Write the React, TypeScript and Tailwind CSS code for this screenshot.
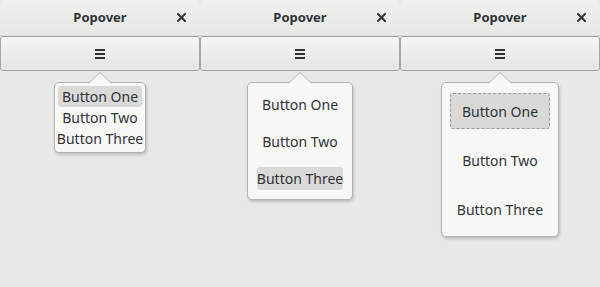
import React from 'react'

const items = ['Button One', 'Button Two', 'Button Three']

type Variant = {
  box: string
  list: string
  item: string
  active: number
  activeCls: string
}

const variants: Variant[] = [
  {
    box: 'w-[92px] mt-[11px]',
    list: 'p-[3px] gap-0',
    item: 'h-[21px]',
    active: 0,
    activeCls: 'bg-[#dadad8] rounded-[3px]',
  },
  {
    box: 'w-[106px] mt-[11px]',
    list: 'pt-[10px] pb-[9px] px-[9px] gap-[14px]',
    item: 'h-[23px]',
    active: 2,
    activeCls: 'bg-[#dadad8] rounded-[3px]',
  },
  {
    box: 'w-[118px] mt-[11px]',
    list: 'pt-[10px] pb-[9px] px-[8px] gap-[13px]',
    item: 'h-[36px]',
    active: 0,
    activeCls: 'bg-[#d9dad8] rounded-[3px] border border-dashed border-[#9c9d9b]',
  },
]

function CloseIcon() {
  return (
    <svg width="9" height="9" viewBox="0 0 9 9" className="text-[#2e3436]">
      <path d="M1 1 L8 8 M8 1 L1 8" stroke="currentColor" strokeWidth="2" strokeLinecap="square" />
    </svg>
  )
}

function MenuIcon() {
  return (
    <svg width="10" height="10" viewBox="0 0 10 10" className="text-[#2e3436]">
      <rect x="0" y="0" width="10" height="2" fill="currentColor" />
      <rect x="0" y="4" width="10" height="2" fill="currentColor" />
      <rect x="0" y="8" width="10" height="2" fill="currentColor" />
    </svg>
  )
}

function Popover({ v }: { v: Variant }) {
  return (
    <div className={`relative ${v.box} bg-[#f8f8f7] border border-[#b3b3b1] rounded-[5px] shadow-[1px_2px_3px_rgba(0,0,0,0.18)]`}>
      {/* arrow */}
      <svg
        width="24"
        height="12"
        viewBox="0 0 24 12"
        className="absolute left-1/2 -translate-x-1/2 -top-[11px]"
      >
        <path d="M0 12 L12 0.5 L24 12 Z" fill="#f8f8f7" />
        <path d="M0.5 11.5 L12 0.5 L23.5 11.5" fill="none" stroke="#b3b3b1" strokeWidth="1" />
      </svg>
      <div className={`flex flex-col ${v.list}`}>
        {items.map((label, i) => (
          <div
            key={label}
            className={`${v.item} flex items-center justify-center text-[14px] text-[#2e3436] whitespace-nowrap ${
              i === v.active ? v.activeCls : ''
            }`}
          >
            {label}
          </div>
        ))}
      </div>
    </div>
  )
}

function Window({ v }: { v: Variant }) {
  return (
    <div className="w-[200px] h-[287px] flex flex-col bg-[#e8e8e7]">
      <div className="relative h-[36px] flex items-center justify-center rounded-t-[5px] bg-gradient-to-b from-[#f0f0ef] to-[#e8e8e7] border-b border-[#d6d6d5]">
        <span className="font-bold text-[13px] text-[#2e3436]">Popover</span>
        <div className="absolute right-[14px] top-[13px] flex">
          <CloseIcon />
        </div>
      </div>
      <div className="h-[35px] flex items-center justify-center rounded-[3px] border border-[#a6a6a5] bg-gradient-to-b from-[#f4f4f3] to-[#e5e5e4]">
        <MenuIcon />
      </div>
      <div className="flex-1 flex flex-col items-center">
        <Popover v={v} />
      </div>
    </div>
  )
}

export default function App() {
  return (
    <div
      className="w-[600px] h-[287px] flex overflow-hidden bg-[#e8e8e7]"
      style={{ fontFamily: '"Noto Sans", "Open Sans", sans-serif' }}
    >
      {variants.map((v, i) => (
        <Window key={i} v={v} />
      ))}
    </div>
  )
}
